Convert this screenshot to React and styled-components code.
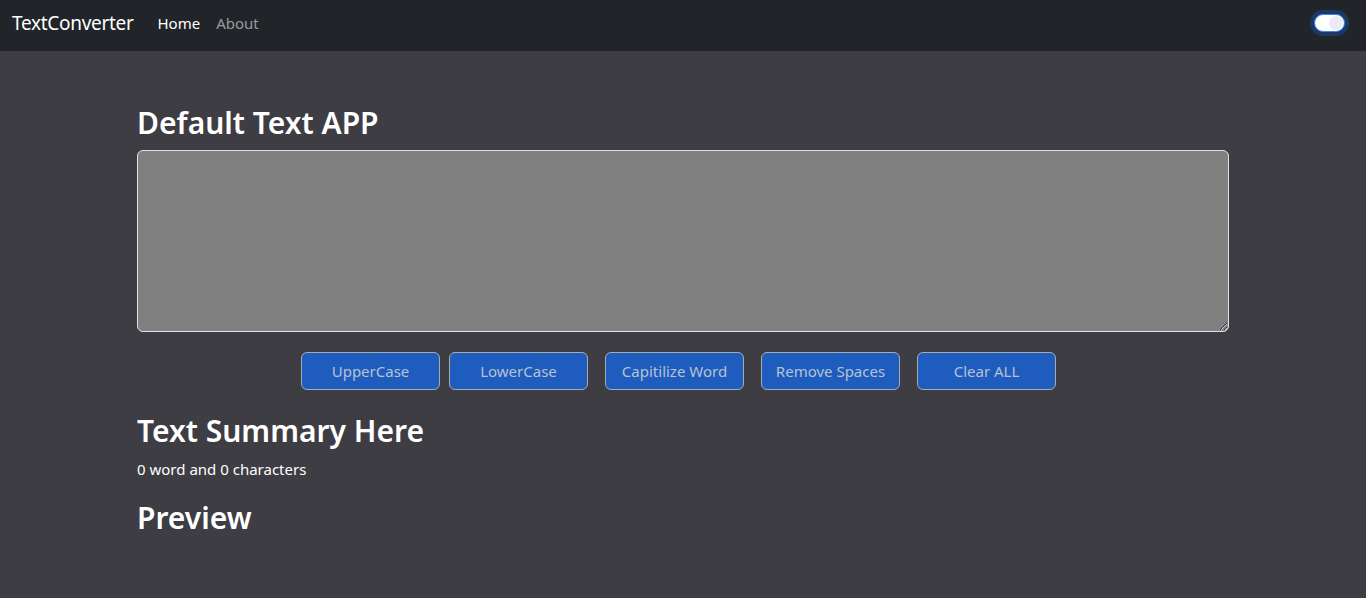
import React, { useState } from "react";
import styled, { createGlobalStyle } from "styled-components";

const GlobalStyle = createGlobalStyle`
  html, body {
    margin: 0;
    padding: 0;
    background-color: #3e3d43;
    color: #ffffff;
    font-family: "Noto Sans", "Open Sans", sans-serif;
  }
  * {
    box-sizing: border-box;
  }
`;

const buttons = [
  { label: "UpperCase", gap: 0 },
  { label: "LowerCase", gap: 9 },
  { label: "Capitilize Word", gap: 17 },
  { label: "Remove Spaces", gap: 17 },
  { label: "Clear ALL", gap: 17 },
];

const App = () => {
  const [text, setText] = useState("");

  const words = text.split(/\s+/).filter((w) => w.length > 0).length;

  return (
    <>
      <GlobalStyle />
      <Navbar>
        <Brand href="#">TextConverter</Brand>
        <NavLinks>
          <NavLink href="#" active>
            Home
          </NavLink>
          <NavLink href="#">About</NavLink>
        </NavLinks>
        <Toggle>
          <Knob />
        </Toggle>
      </Navbar>

      <Main>
        <Heading>Default Text APP</Heading>
        <TextBox
          rows={7}
          value={text}
          onChange={(e) => setText(e.target.value)}
        />
        <ButtonRow>
          {buttons.map((b) => (
            <ActionButton key={b.label} gap={b.gap}>
              {b.label}
            </ActionButton>
          ))}
        </ButtonRow>

        <SummaryHeading>Text Summary Here</SummaryHeading>
        <Summary>
          {words} word and {text.length} characters
        </Summary>
        <SummaryHeading>Preview</SummaryHeading>
      </Main>
    </>
  );
};

export default App;

// Styled components

const Navbar = styled.nav`
  display: flex;
  align-items: center;
  height: 51px;
  padding: 0 21px 5px 12px;
  background-color: #212529;
`;

const Brand = styled.a`
  font-size: 19px;
  color: #ffffff;
  text-decoration: none;
  margin-right: 16px;
  letter-spacing: -0.3px;
`;

const NavLinks = styled.div`
  display: flex;
  align-items: center;
  flex: 1;
`;

const NavLink = styled.a`
  padding: 8px;
  font-size: 15px;
  text-decoration: none;
  color: ${(props) => (props.active ? "#ffffff" : "rgba(255, 255, 255, 0.55)")};
`;

const Toggle = styled.div`
  position: relative;
  width: 31px;
  height: 18px;
  border-radius: 9px;
  background-color: #ffffff;
  border: 1px solid #3d7ff0;
  box-shadow: 0 0 0 4px rgba(13, 110, 253, 0.28);
`;

const Knob = styled.span`
  position: absolute;
  top: 1px;
  right: 1px;
  width: 14px;
  height: 14px;
  border-radius: 50%;
  background-color: #e9ecf2;
`;

const Main = styled.main`
  width: 1092px;
  margin: 0 auto;
  padding-top: 53px;
`;

const Heading = styled.h1`
  margin: 0 0 8px;
  font-size: 30px;
  font-weight: 600;
  line-height: 38px;
`;

const TextBox = styled.textarea`
  display: block;
  width: 100%;
  height: 182px;
  padding: 6px 12px;
  font-family: inherit;
  font-size: 16px;
  line-height: 1.5;
  color: #ffffff;
  background-color: #808080;
  border: 1px solid #dee2e6;
  border-radius: 6px;
  outline: none;
`;

const ButtonRow = styled.div`
  display: flex;
  justify-content: center;
  padding-right: 9px;
  margin: 20px 0 22px;
`;

const ActionButton = styled.button`
  width: 139px;
  height: 38px;
  margin-left: ${(props) => props.gap}px;
  font-family: inherit;
  font-size: 15px;
  color: #b8c2d2;
  background-color: #1e5dbd;
  border: 1px solid #a9abb2;
  border-radius: 6px;
  cursor: pointer;
`;

const SummaryHeading = styled.h2`
  margin: 0 0 8px;
  font-size: 30px;
  font-weight: 600;
  line-height: 38px;
`;

const Summary = styled.p`
  margin: 0 0 18px;
  font-size: 15px;
  line-height: 1.5;
`;
